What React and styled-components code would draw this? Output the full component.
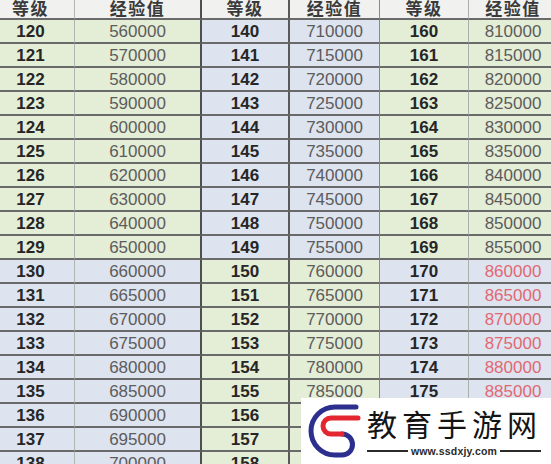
import React from 'react'
import styled, { createGlobalStyle } from 'styled-components'

const GlobalStyle = createGlobalStyle`
  html, body {
    margin: 0;
    padding: 0;
    background: #fff;
    overflow: hidden;
  }
  body {
    font-family: 'Liberation Sans', Arial, sans-serif;
  }
`

// three bands of levels, each band is a pair of columns (level, exp)
// covered: which of the two cells sit under the watermark
const bands = [
  {
    start: 120,
    exp: (l) => (l < 130 ? 560000 + (l - 120) * 10000 : 660000 + (l - 130) * 5000),
    tone: (l) => (l < 130 ? 'green' : 'blue'),
    red: () => false,
    covered: () => [false, false],
  },
  {
    start: 140,
    exp: (l) => 710000 + (l - 140) * 5000,
    tone: (l) => (l < 150 ? 'blue' : 'green'),
    red: () => false,
    covered: (l) => [false, l >= 156],
  },
  {
    start: 160,
    exp: (l) => 810000 + (l - 160) * 5000,
    tone: (l) => (l < 170 ? 'green' : 'blue'),
    red: (l) => l >= 170,
    covered: (l) => [l >= 176, l >= 176],
  },
]

const ROWS = 19

const tones = {
  header: '#f1f2f0',
  green: '#e4edd6',
  blue: '#dde3ef',
}

// right edge of each of the six columns
const edges = [
  '1px solid #b3b3b3',
  '2px solid #4f4f4f',
  '2px solid #5a5a5a',
  '1px solid #8a8a8a',
  '1px solid #adadad',
  'none',
]

const Page = styled.div`
  position: relative;
  width: 551px;
  height: 464px;
  overflow: hidden;
`

const Sheet = styled.div`
  display: grid;
  grid-template-columns: 88px 127px 88px 90px 89px 88px;
  grid-auto-rows: 24px;
  margin-left: -13px;
  margin-top: -4.5px;
  width: 570px;
`

const Cell = styled.div`
  box-sizing: border-box;
  display: flex;
  align-items: center;
  justify-content: center;
  background: ${(p) => tones[p.$tone]};
  border-bottom: 2px solid #6a6a6a;
  border-right: ${(p) => edges[p.$col]};
  font-size: 17px;
  line-height: 1;
  padding-top: 1px;
`

const HeadText = styled.span`
  font-family: 'Noto Sans CJK SC', 'Liberation Sans', sans-serif;
  font-weight: 700;
  font-size: 17px;
  color: #3a3a3a;
  letter-spacing: 1.5px;
`

const Level = styled.span`
  font-weight: 700;
  color: #262626;
`

const Exp = styled.span`
  font-weight: 400;
  color: ${(p) => (p.$red ? '#e26873' : '#5c5c5c')};
`

const Watermark = styled.div`
  position: absolute;
  left: 301px;
  top: 398px;
  right: 0;
  bottom: 0;
  background: #fff;
  display: flex;
  align-items: center;
  gap: 3px;
  padding-left: 3px;
  padding-top: 2px;
`

const Brand = styled.div`
  display: flex;
  flex-direction: column;
  align-items: stretch;
  width: 174px;
`

const BrandName = styled.div`
  font-family: 'Noto Sans CJK SC', sans-serif;
  font-weight: 400;
  font-size: 30px;
  line-height: 32px;
  letter-spacing: 5px;
  color: #141414;
  white-space: nowrap;
  overflow: hidden;
`

const UrlRow = styled.div`
  display: flex;
  align-items: center;
  gap: 3px;
  margin-top: 6px;
`

const Rule = styled.div`
  flex: 1;
  height: 2px;
  background: #2a2a2a;
`

const Url = styled.span`
  font-family: 'Liberation Sans', Arial, sans-serif;
  font-size: 10.5px;
  line-height: 12px;
  font-weight: 700;
  color: #2a2a2a;
  letter-spacing: 0.2px;
`

const Logo = () => (
  <svg width='60' height='60' viewBox='0 0 60 60'>
    <path
      d='M52 5 H31 A24 24 0 0 0 31 53 H38 A10.5 10.5 0 0 0 38 32'
      fill='none'
      stroke='#2d2f8e'
      strokeWidth='5'
      strokeLinecap='round'
    />
    <path
      d='M54 16 H27 A8 8 0 0 0 27 32 H38'
      fill='none'
      stroke='#e3262f'
      strokeWidth='5'
      strokeLinecap='round'
    />
  </svg>
)

const App = () => {
  const cells = []
  bands.forEach((b, i) => {
    cells.push(
      <Cell key={`h-l-${i}`} $tone='header' $col={i * 2} style={{ gridRow: 1, gridColumn: i * 2 + 1 }}>
        <HeadText>等级</HeadText>
      </Cell>
    )
    cells.push(
      <Cell key={`h-e-${i}`} $tone='header' $col={i * 2 + 1} style={{ gridRow: 1, gridColumn: i * 2 + 2 }}>
        <HeadText>经验值</HeadText>
      </Cell>
    )
    for (let r = 0; r < ROWS; r++) {
      const level = b.start + r
      const tone = b.tone(level)
      const [hideLevel, hideExp] = b.covered(level)
      cells.push(
        <Cell key={`l-${level}`} $tone={tone} $col={i * 2} style={{ gridRow: r + 2, gridColumn: i * 2 + 1 }}>
          {!hideLevel && <Level>{level}</Level>}
        </Cell>
      )
      cells.push(
        <Cell key={`e-${level}`} $tone={tone} $col={i * 2 + 1} style={{ gridRow: r + 2, gridColumn: i * 2 + 2 }}>
          {!hideExp && <Exp $red={b.red(level)}>{b.exp(level)}</Exp>}
        </Cell>
      )
    }
  })

  return (
    <Page>
      <GlobalStyle />
      <Sheet>{cells}</Sheet>
      <Watermark>
        <Logo />
        <Brand>
          <BrandName>教育手游网</BrandName>
          <UrlRow>
            <Rule />
            <Url>www.ssdxjy.com</Url>
            <Rule />
          </UrlRow>
        </Brand>
      </Watermark>
    </Page>
  )
}

export default App
